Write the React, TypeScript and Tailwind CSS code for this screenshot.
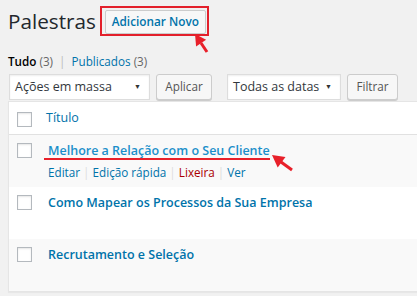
import React from "react";

const rows = [
  { title: "Melhore a Relação com o Seu Cliente", hover: true, bg: "bg-[#f9f9f9]" },
  { title: "Como Mapear os Processos da Sua Empresa", hover: false, bg: "bg-white" },
  { title: "Recrutamento e Seleção", hover: false, bg: "bg-[#f9f9f9]" },
];

const Checkbox = () => (
  <span className="block w-[15px] h-[15px] border border-[#b4b9be] bg-white shadow-[inset_0_1px_2px_rgba(0,0,0,0.1)]" />
);

const Select = ({ label, width }: { label: string; width: string }) => (
  <div
    className={`${width} h-[26px] flex items-center justify-between pl-[5px] pr-[8px] bg-white border border-[#ddd] shadow-[inset_0_1px_2px_rgba(0,0,0,0.07)] text-[12.5px] text-[#32373c] whitespace-nowrap`}
  >
    <span>{label}</span>
    <span className="text-[7px] text-[#333]">▼</span>
  </div>
);

const Button = ({ label, width }: { label: string; width: string }) => (
  <button
    type="button"
    className={`${width} h-[26px] flex items-center justify-center bg-[#f7f7f7] border border-[#ccc] rounded-[3px] shadow-[0_1px_0_#ccc] text-[11.7px] text-[#555]`}
  >
    {label}
  </button>
);

export default function App() {
  return (
    <div
      className="relative w-[417px] h-[296px] overflow-hidden bg-[#f1f1f1] text-[#444]"
      style={{ fontFamily: '"Open Sans", "Liberation Sans", sans-serif' }}
    >
      {/* cabeçalho */}
      <div className="flex items-center pl-2 pt-[6px]">
        <h1 className="text-[20.7px] leading-[29px] font-normal text-[#23282d]">Palestras</h1>
        <div className="ml-[4px] border-2 border-[#e3202b] pl-[3px] pr-[1px] pt-[2px] pb-[0px] h-[30px]">
          <button
            type="button"
            className="w-[101px] h-[24px] flex items-center justify-center bg-[#f7f7f7] border border-[#ccc] rounded-[2px] text-[11.8px] font-semibold text-[#0073aa]"
          >
            Adicionar Novo
          </button>
        </div>
      </div>

      {/* filtros */}
      <div className="pl-2 mt-[15px] text-[11.7px] leading-[20px] text-[#666]">
        <span className="font-semibold text-black">Tudo</span> <span>(3)</span>
        <span className="text-[#bbb] mx-[6px]">|</span>
        <span className="text-[#0073aa]">Publicados</span> <span>(3)</span>
      </div>

      {/* toolbar */}
      <div className="flex items-center pl-[9px] mt-[3px]">
        <Select label="Ações em massa" width="w-[141px]" />
        <div className="ml-[6px]">
          <Button label="Aplicar" width="w-[56px]" />
        </div>
        <div className="ml-[15px]">
          <Select label="Todas as datas" width="w-[114px]" />
        </div>
        <div className="ml-[6px]">
          <Button label="Filtrar" width="w-[51px]" />
        </div>
      </div>

      {/* tabela */}
      <div className="ml-2 mt-[1px] w-[430px] bg-white border border-[#e5e5e5] shadow-[0_1px_1px_rgba(0,0,0,0.04)]">
        <div className="h-[33px] flex items-center border-b border-[#e1e1e1]">
          <div className="w-[37px] pl-[8px] pt-[2px]">
            <Checkbox />
          </div>
          <span className="text-[12.5px] text-[#0073aa]">Título</span>
        </div>
        {rows.map((r) => (
          <div key={r.title} className={`h-[52px] flex ${r.bg}`}>
            <div className="w-[39px] pl-[8px] pt-[8px]">
              <Checkbox />
            </div>
            <div className="pt-[6px]">
              <div
                className={`text-[12.5px] leading-[20px] font-semibold ${
                  r.hover ? "text-[#1b8fca]" : "text-[#0073aa]"
                }`}
              >
                {r.title}
              </div>
              {r.hover && (
                <div className="mt-[2px] text-[11.7px] leading-[19px] text-[#0073aa]">
                  Editar <span className="text-[#ddd]">|</span> Edição rápida{" "}
                  <span className="text-[#ddd]">|</span> <span className="text-[#a00]">Lixeira</span>{" "}
                  <span className="text-[#ddd]">|</span> Ver
                </div>
              )}
            </div>
          </div>
        ))}
      </div>

      {/* anotações */}
      <svg className="absolute inset-0 pointer-events-none" width="417" height="296">
        <polygon points="195,34 206.1,39.8 196.1,46.5" fill="#e8202a" />
        <line x1="201" y1="43" x2="207" y2="52" stroke="#e8202a" strokeWidth="3" />
        <rect x="44" y="158" width="226" height="2" fill="#e8202a" />
        <polygon points="272,155 285.5,157 277.7,167.4" fill="#e8202a" />
        <line x1="281" y1="162" x2="292" y2="170" stroke="#e8202a" strokeWidth="3" />
      </svg>
    </div>
  );
}
